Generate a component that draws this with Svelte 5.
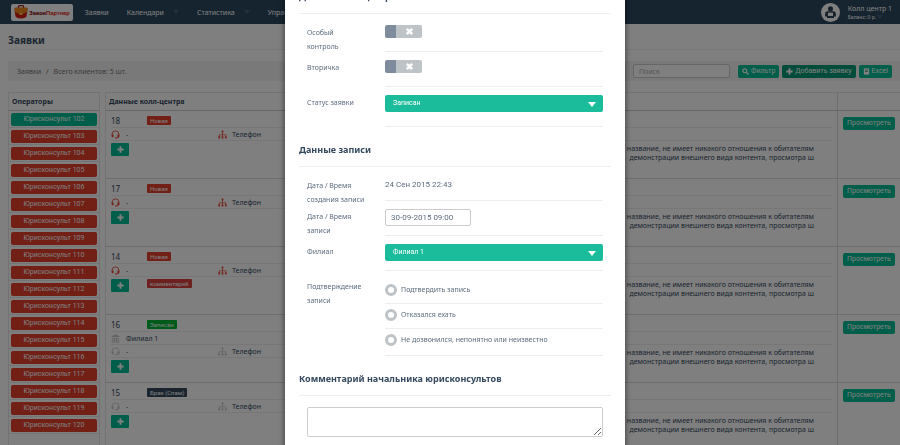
<script>
  const navItems = [
    { label: 'Заявки', menu: false },
    { label: 'Календари', menu: true },
    { label: 'Статистика', menu: true },
    { label: 'Управление', menu: true }
  ];

  // Operators 102..120, the first one is online
  const operators = Array.from({ length: 19 }, (_, i) => ({
    number: 102 + i,
    online: i === 0
  }));

  const requests = [
    { id: 18, status: 'Новая', kind: 'new' },
    { id: 17, status: 'Новая', kind: 'new' },
    { id: 14, status: 'Новая', kind: 'new', comment: 'комментарий' },
    { id: 16, status: 'Записан', kind: 'booked', branch: 'Филиал 1' },
    { id: 15, status: 'Брак (Спам)', kind: 'spam' }
  ];

  const answers = [
    'Подтвердить запись',
    'Отказался ехать',
    'Не дозвонился, непонятно или неизвестно'
  ];

  let special = $state(false);
  let secondary = $state(false);
  let answer = $state('');
  let visitDate = $state('30-09-2015 09:00');
</script>

{#snippet plusIcon()}
  <svg class="plus" viewBox="0 0 10 10" aria-hidden="true">
    <path d="M3.7 0.5h2.6v3.2h3.2v2.6H6.3v3.2H3.7V6.3H0.5V3.7h3.2z" fill="currentColor" />
  </svg>
{/snippet}

{#snippet crossIcon()}
  <svg class="cross" viewBox="0 0 10 10" aria-hidden="true">
    <path d="M2 2l6 6M8 2l-6 6" stroke="#fff" stroke-width="2.8" />
  </svg>
{/snippet}

<div class="page">
  <header class="topbar">
    <a class="logo" href="#home" aria-label="ЗаконПартнер">
      <svg viewBox="0 0 14 14" aria-hidden="true">
        <path d="M4.5 3V1.4Q4.5 0.7 5.2 0.7h3.6q.7 0 .7.7V3" fill="none" stroke="#a3231b" stroke-width="1.2" />
        <path d="M0.5 4q0-1.3 1.3-1.3h10.4q1.3 0 1.3 1.3L12.6 11Q12 13.4 7 13.6 2 13.4 1.4 11z" fill="#d81f16" />
        <path d="M0.5 4q0-1.3 1.3-1.3h10.4q1.3 0 1.3 1.3v2.2Q10.5 9 7 9.2 3.5 9 0.5 6.2z" fill="#f08a1c" />
        <path d="M5.6 7.8h2.8v2.2H5.6z" fill="#ffc23d" />
      </svg>
      <span class="logo-text"><b>Закон</b><i>Партнер</i></span>
    </a>
    <nav>
      {#each navItems as item}
        <a href="#nav">
          {item.label}
          {#if item.menu}<span class="caret"></span>{/if}
        </a>
      {/each}
    </nav>
    <div class="user">
      <svg viewBox="0 0 20 20" aria-hidden="true">
        <circle cx="10" cy="10" r="10" fill="#fff" />
        <circle cx="10" cy="6" r="2.7" fill="#2c4258" />
        <path d="M6.3 8.6h7.4q2 .6 2 3v2.6h-2v1.6H6.3v-1.6h-2v-2.6q0-2.4 2-3z" fill="#2c4258" />
        <path d="M7.3 10.2h5.4v3.4H7.3z" fill="#fff" />
      </svg>
      <div>
        <div>Колл центр 1</div>
        <div class="balance">Баланс: 0 р. <span class="caret"></span></div>
      </div>
    </div>
  </header>

  <h1>Заявки</h1>

  <div class="toolbar">
    <div class="crumbs"><a href="#requests">Заявки</a><span>/</span>Всего клиентов: 5 шт.</div>
    <input type="text" placeholder="Поиск" aria-label="Поиск" />
    <button class="btn">
      <svg viewBox="0 0 10 10" aria-hidden="true">
        <circle cx="4" cy="4" r="2.8" fill="none" stroke="currentColor" stroke-width="1.7" />
        <path d="M6.2 6.2l3 3" stroke="currentColor" stroke-width="2" />
      </svg>
      Фильтр
    </button>
    <button class="btn dark">{@render plusIcon()} Добавить заявку</button>
    <button class="btn">
      <svg viewBox="0 0 10 10" aria-hidden="true">
        <path d="M1.2 0.5h7.6v9H1.2z" fill="currentColor" />
        <path d="M3 3h4M3 5h4" stroke="#12836d" stroke-width="1" />
      </svg>
      Excel
    </button>
  </div>

  <div class="tables">
    <table class="operators">
      <thead><tr><th>Операторы</th></tr></thead>
      <tbody>
        {#each operators as op (op.number)}
          <tr><td><button class:online={op.online}>Юрисконсульт {op.number}</button></td></tr>
        {/each}
        <tr><td></td></tr>
      </tbody>
    </table>

    <table class="requests">
      <thead>
        <tr><th>Данные колл-центра</th><th class="note-col"></th><th class="action-col"></th></tr>
      </thead>
      <tbody>
        {#each requests as r (r.id)}
          <tr>
            <td class="call">
              <div class="line first">
                <span class="id">{r.id}</span>
                <span class="tag {r.kind}">{r.status}</span>
              </div>
              {#if r.branch}
                <div class="line">
                  <svg class="icon muted" viewBox="0 0 16 16" aria-hidden="true">
                    <path d="M8 1l7 3v1.5H1V4zM2.5 6.5h2v6h-2zM5.8 6.5h1.7v6H5.8zM8.7 6.5h1.7v6H8.7zM11.7 6.5h2v6h-2zM1 13.2h14V15H1z" fill="currentColor" />
                  </svg>
                  <span>{r.branch}</span>
                </div>
              {/if}
              <div class="line">
                <svg class="icon" class:muted={r.kind !== 'new'} viewBox="0 0 16 16" aria-hidden="true">
                  <path d="M2 9V7.5a6 6 0 0 1 12 0V9M14 11q0 3-4.5 3" fill="none" stroke="currentColor" stroke-width="1.4" />
                  <path d="M1 8h3.5v5H3Q1 12.5 1 10.5zM15 8h-3.5v5H13q2-.5 2-2.5zM7.5 13h2.5v2H7.5z" fill="currentColor" />
                </svg>
                <span>-</span>
                <svg class="icon" class:muted={r.kind !== 'new'} viewBox="0 0 16 16" aria-hidden="true">
                  <path d="M8 3v9M2 12V8.5h12V12" fill="none" stroke="currentColor" stroke-width="1.2" />
                  <path d="M6.5 1h3v3.5h-3zM0.7 11h3v4h-3zM6.5 11h3v4h-3zM12.3 11h3v4h-3z" fill="currentColor" />
                </svg>
                <span>Телефон</span>
              </div>
              <div class="line last">
                <button class="add" aria-label="Добавить комментарий">{@render plusIcon()}</button>
                {#if r.comment}<span class="tag remark">{r.comment}</span>{/if}
              </div>
            </td>
            <td class="note-col">
              <div class="line first"></div>
              <div class="line"></div>
              <p>название, не имеет никакого отношения к обитателям<br />демонстрации внешнего вида контента, просмотра ш</p>
            </td>
            <td class="action-col"><button class="btn">Просмотреть</button></td>
          </tr>
        {/each}
      </tbody>
    </table>
  </div>
</div>

<div class="overlay">
  <div class="modal" role="dialog" aria-modal="true" aria-label="Заявка">
    <h2>Данные колл-центра</h2>
    <div class="row">
      <label for="special">Особый контроль</label>
      <div class="field">
        <span class="switch">
          <input id="special" type="checkbox" bind:checked={special} />
          {@render crossIcon()}
        </span>
      </div>
    </div>
    <div class="row">
      <label for="secondary">Вторичка</label>
      <div class="field">
        <span class="switch">
          <input id="secondary" type="checkbox" bind:checked={secondary} />
          {@render crossIcon()}
        </span>
      </div>
    </div>
    <div class="row">
      <label for="status">Статус заявки</label>
      <div class="field tall">
        <div class="select"><select id="status"><option>Записан</option></select></div>
      </div>
    </div>

    <h2>Данные записи</h2>
    <div class="row">
      <span class="label">Дата / Время создания записи</span>
      <div class="field plain">24 Сен 2015 22:43</div>
    </div>
    <div class="row">
      <label for="visit">Дата / Время записи</label>
      <div class="field"><input id="visit" class="date" type="text" bind:value={visitDate} /></div>
    </div>
    <div class="row">
      <label for="branch">Филиал</label>
      <div class="field">
        <div class="select"><select id="branch"><option>Филиал 1</option></select></div>
      </div>
    </div>
    <div class="row" role="radiogroup" aria-labelledby="confirm-label">
      <span class="label" id="confirm-label">Подтверждение записи</span>
      <div class="answers">
        {#each answers as text}
          <label class="answer">
            <input type="radio" name="answer" value={text} bind:group={answer} />
            {text}
          </label>
        {/each}
      </div>
    </div>

    <h2 id="comment-title">Комментарий начальника юрисконсультов</h2>
    <div class="comment"><textarea aria-labelledby="comment-title"></textarea></div>
  </div>
</div>

<style>
  :global(body) {
    margin: 0;
    overflow: hidden;
    background: #fff;
    color: #34495e;
    font: 7px/9px "Noto Sans", sans-serif;
  }

  .page,
  .overlay {
    height: 100vh;
    overflow: hidden;
  }

  .page *,
  .overlay * {
    box-sizing: border-box;
  }

  a {
    color: inherit;
    text-decoration: none;
  }

  button,
  input,
  select,
  textarea {
    font: inherit;
    margin: 0;
  }

  button {
    border: 0;
    cursor: pointer;
    color: #fff;
  }

  /* Top bar */
  .topbar {
    display: flex;
    align-items: center;
    height: 24px;
    padding: 0 8px 0 11px;
    background: #2c4860;
    color: #fff;
  }

  .logo {
    display: flex;
    align-items: center;
    gap: 1px;
    height: 17px;
    padding: 0 3px;
    border-radius: 2px;
    background: #fff;
  }

  .logo svg {
    width: 14px;
    height: 14px;
  }

  .logo-text {
    font: bold 6px/17px Roboto, sans-serif;
  }

  .logo-text b {
    color: #8e1b1b;
  }

  .logo-text i {
    font-style: normal;
    color: #e8301f;
  }

  nav {
    display: flex;
    gap: 18px;
    margin-left: 12px;
    flex: 1;
  }

  nav a {
    display: flex;
    align-items: center;
    gap: 9px;
  }

  .caret {
    display: inline-block;
    border: 3px solid transparent;
    border-top: 4px solid #46627c;
    border-bottom: 0;
  }

  .user {
    display: flex;
    align-items: center;
    gap: 8px;
  }

  .user svg {
    width: 19px;
    height: 19px;
  }

  .balance {
    font-size: 5px;
    line-height: 8px;
  }

  /* Page title and toolbar */
  h1 {
    margin: 0 0 0 8px;
    padding: 9px 0 1px;
    border-bottom: 1px solid #eee;
    font-size: 10px;
    line-height: 15px;
  }

  .toolbar {
    display: flex;
    align-items: center;
    gap: 3px;
    height: 20px;
    margin: 11px 0 0 8px;
    padding: 0 8px 0 9px;
    background: #f2f2f2;
  }

  .crumbs {
    display: flex;
    gap: 5px;
    flex: 1;
    color: #777;
  }

  .toolbar input {
    width: 97px;
    height: 14px;
    margin-right: 5px;
    padding: 0 5px;
    border: 1px solid #ccc;
    border-radius: 2px;
    background: #fff;
  }

  .toolbar input::placeholder {
    color: #aaa;
  }

  .btn {
    display: flex;
    align-items: center;
    justify-content: center;
    gap: 2px;
    height: 13px;
    padding: 0 4px;
    border-radius: 2px;
    background: #00bd94;
    font-family: Roboto, sans-serif;
  }

  .btn.dark {
    background: #009874;
  }

  .btn svg {
    width: 7px;
    height: 7px;
  }

  /* Tables */
  .tables {
    display: flex;
    align-items: flex-start;
    gap: 5px;
    margin: 11px 0 0 8px;
  }

  table {
    border-collapse: separate;
    border-spacing: 0;
    border: 1px solid #e6e6e6;
    border-bottom: 0;
    table-layout: fixed;
  }

  th {
    height: 18px;
    padding: 0 3px;
    border-bottom: 1px solid #ccc;
    text-align: left;
  }

  td {
    padding: 0;
    vertical-align: top;
  }

  .operators {
    width: 92px;
  }

  .operators td {
    height: 17px;
    padding: 2px 2px 1px;
    border-bottom: 1px solid #e9e9e9;
  }

  .operators button {
    display: block;
    width: 100%;
    height: 13px;
    padding: 0;
    border-radius: 2px;
    background: #e43e2b;
    font-family: Roboto, sans-serif;
  }

  .operators button.online {
    background: #00bd94;
  }

  .requests {
    flex: 1;
    border-right: 0;
  }

  .requests td {
    height: 68px;
    padding: 3px 5px 0;
    border-bottom: 1px solid #ddd;
  }

  .requests .note-col {
    width: 225px;
    padding-left: 0;
    text-align: right;
  }

  .requests .action-col {
    width: 63px;
    padding-top: 6px;
    border-left: 1px solid #ddd;
  }

  .requests .action-col .btn {
    width: 52px;
    padding: 0;
  }

  .line {
    display: grid;
    grid-template-columns: 15px 92px 14px 1fr;
    align-items: center;
    height: 13px;
    border-bottom: 1px solid #eee;
  }

  .line.first,
  .line.last {
    grid-template-columns: 36px 1fr;
    justify-items: start;
  }

  .line.first {
    height: 14px;
  }

  .line.last {
    height: 17px;
    border-bottom: 0;
  }

  .note-col p {
    margin: 3px 18px 0 0;
    white-space: nowrap;
  }

  .icon {
    width: 9px;
    height: 9px;
    color: #e43e2b;
  }

  .icon.muted {
    color: #c4c4c4;
  }

  .id {
    font-size: 8px;
  }

  .tag {
    padding: 0 3px;
    border-radius: 1px;
    color: #fff;
    font-size: 6px;
    font-family: Roboto, sans-serif;
    line-height: 9px;
  }

  .tag.new {
    background: #e43e2b;
  }

  .tag.booked {
    background: #00b432;
  }

  .tag.spam {
    background: #34495e;
  }

  .tag.remark {
    align-self: start;
    margin-top: 2px;
    background: #d9413f;
  }

  .add {
    display: flex;
    align-items: center;
    justify-content: center;
    width: 18px;
    height: 13px;
    padding: 0;
    border-radius: 1px;
    background: #00bd94;
  }

  .plus {
    width: 7px;
    height: 7px;
  }

  /* Modal */
  .overlay {
    position: fixed;
    inset: 0;
    padding-left: 10px;
    background: rgba(0, 0, 0, 0.5);
  }

  .modal {
    max-width: 340px;
    min-height: 100vh;
    margin: -26px auto 0;
    padding: 0 14px 26px;
    background: #fff;
    box-shadow: 0 2px 6px rgba(0, 0, 0, 0.6);
  }

  h2 {
    margin: 0 0 3px;
    padding: 13px 0 6px;
    border-bottom: 1px solid #eee;
    font-size: 9px;
    line-height: 20px;
  }

  .row {
    display: grid;
    grid-template-columns: 78px 1fr;
    align-items: start;
    padding: 0 8px;
    color: #5d6d7e;
  }

  .row > label,
  .row > .label {
    padding: 9px 18px 0 0;
    margin-bottom: -6px;
    line-height: 14px;
  }

  .field {
    height: 35px;
    padding-top: 8px;
    border-bottom: 1px solid #eee;
  }

  .field.tall {
    height: 40px;
  }

  .field.plain {
    height: 31px;
    font: 8px/14px Roboto, sans-serif;
  }

  .switch {
    display: flex;
    position: relative;
    width: 37px;
    height: 13px;
  }

  .switch input {
    appearance: none;
    width: 100%;
    border-left: 11px solid #7f8c9d;
    border-radius: 2px;
    background: #bdc3c7;
  }

  .switch input:checked {
    border-left: 0;
    border-right: 11px solid #7f8c9d;
    background: #1abc9c;
  }

  .cross {
    position: absolute;
    top: 2px;
    left: 20px;
    width: 9px;
    height: 9px;
    pointer-events: none;
  }

  .select {
    position: relative;
  }

  .select::after {
    content: '';
    position: absolute;
    top: 7px;
    right: 7px;
    border: 4px solid transparent;
    border-top: 5px solid #fff;
    border-bottom: 0;
    pointer-events: none;
  }

  select {
    appearance: none;
    display: block;
    width: 100%;
    height: 17px;
    padding: 0 8px;
    border: 0;
    border-radius: 2px;
    background: #1abc9c;
    color: #fff;
    font-family: Roboto, sans-serif;
  }

  .date {
    width: 86px;
    height: 17px;
    padding: 0 5px;
    border: 1px solid #ccc;
    border-radius: 2px;
    color: #5d6d7e;
    font: 8px Roboto, sans-serif;
  }

  .answer {
    display: flex;
    align-items: center;
    gap: 4px;
    padding: 5px 0 7px;
    border-bottom: 1px solid #eee;
    line-height: 12px;
  }

  .answer:first-child {
    padding-top: 13px;
  }

  .answer:last-child {
    padding-bottom: 9px;
  }

  .answer input {
    appearance: none;
    width: 12px;
    height: 12px;
    border: 3px solid #bdc3c7;
    border-radius: 50%;
  }

  .answer input:checked {
    background: #1abc9c;
  }

  .comment {
    padding: 8px 8px 0;
  }

  textarea {
    display: block;
    width: 100%;
    height: 30px;
    border: 1px solid #ccc;
    border-radius: 2px;
    resize: vertical;
  }
</style>
